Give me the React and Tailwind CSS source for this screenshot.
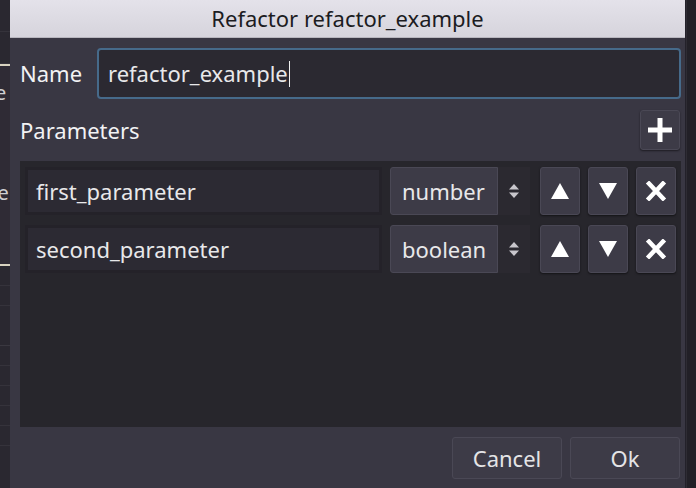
import React from "react";

const font = { fontFamily: '"Noto Sans", "Open Sans", sans-serif' };

function IconBtn({ children }) {
  return (
    <div className="w-[40px] h-[48px] flex items-center justify-center rounded-[3px] bg-[#3d3b47] border border-[#4a4855] shadow-[0_1px_2px_rgba(0,0,0,0.5)]">
      {children}
    </div>
  );
}

function Up() {
  return (
    <svg width="20" height="18" viewBox="0 0 20 18"><polygon points="10,1 19,17 1,17" fill="#fff" /></svg>
  );
}
function Down() {
  return (
    <svg width="20" height="18" viewBox="0 0 20 18"><polygon points="1,1 19,1 10,17" fill="#fff" /></svg>
  );
}
function X() {
  return (
    <svg width="22" height="20" viewBox="0 0 22 20"><path d="M2.5 1 L19.5 19 M19.5 1 L2.5 19" stroke="#fff" strokeWidth="4.5" /></svg>
  );
}

function Row({ name, type }) {
  return (
    <div className="flex items-center h-[48px]">
      <div className="w-[357px] h-[48px] flex items-center pl-[8px] bg-[#2c2a33] border-[3px] border-[#242229] text-[#e8e8ea] text-[22px]">
        {name}
      </div>
      <div className="ml-[8px] flex h-[48px]">
        <div className="w-[108px] h-[48px] flex items-center pl-[11px] bg-[#3d3b47] border border-[#4a4855] rounded-l-[3px] text-[#e8e8ea] text-[22px]">
          {type}
        </div>
        <div className="w-[32px] h-[48px] bg-[#2b2930] flex items-center justify-center">
          <svg width="12" height="20" viewBox="0 0 12 20"><polygon points="6,3 11,8.5 1,8.5" fill="#c8c6cc" /><polygon points="1,11.5 11,11.5 6,17" fill="#c8c6cc" /></svg>
        </div>
      </div>
      <div className="ml-[10px] flex gap-[8px]">
        <IconBtn><Up /></IconBtn>
        <IconBtn><Down /></IconBtn>
        <IconBtn><X /></IconBtn>
      </div>
    </div>
  );
}

export default function App() {
  return (
    <div className="w-[696px] h-[488px] flex bg-[#252329] overflow-hidden" style={font}>
      <div className="w-[10px] h-full flex flex-col bg-[#2a2830] overflow-hidden shrink-0">
        <div className="h-[32px] border-b border-[#35333b]" />
        <div className="h-[32px] border-b border-[#35333b]" />
        <div className="h-[2px] bg-[#d8d2c0]" />
        <div className="h-[198px] bg-[#2f2b35] relative text-[#cfcfd2] text-[20px] overflow-hidden">
          <div className="absolute left-[-5px] top-[12px]">e</div>
          <div className="absolute left-[-12px] top-[112px]">se</div>
        </div>
        <div className="h-[2px] bg-[#d8d2c0]" />
        <div className="h-[20px] border-b border-[#35333b]" />
        <div className="h-[20px] border-b border-[#35333b]" />
        <div className="h-[40px] border-b border-[#3a3840]" />
        <div className="h-[20px] border-b border-[#35333b]" />
        <div className="h-[20px] border-b border-[#35333b]" />
        <div className="h-[20px] border-b border-[#35333b]" />
        <div className="h-[20px] border-b border-[#35333b]" />
        <div className="h-[20px] border-b border-[#35333b]" />
      </div>
      <div className="w-[676px] h-full flex flex-col bg-[#393743] border-r border-[#23212a] shrink-0">
        <div className="h-[38px] bg-gradient-to-b from-[#e4e2ea] to-[#d6d4dc] border-b border-[#b8b6be] flex items-center justify-center text-[#1c1c1f] text-[22px]">
          Refactor refactor_example
        </div>
        <div className="flex-1 flex flex-col pl-[10px] pr-[4px] pt-[10px]">
          <div className="flex items-center h-[51px]">
            <span className="text-[#f2f2f4] text-[22px] w-[77px]">Name</span>
            <div className="flex-1 h-[51px] rounded-[4px] border-2 border-[#466a8a] bg-[#2b2931] flex items-center pl-[9px] text-[#e8e8ea] text-[22px]">
              refactor_example<span className="inline-block w-[1px] h-[26px] bg-[#f0f0f0] ml-[1px]" />
            </div>
          </div>
          <div className="flex items-center justify-between mt-[11px] h-[40px]">
            <span className="text-[#f2f2f4] text-[22px]">Parameters</span>
            <div className="w-[40px] h-[40px] mr-[1px] rounded-[3px] bg-[#3d3b47] border border-[#4a4855] flex items-center justify-center shadow-[0_1px_2px_rgba(0,0,0,0.5)]">
              <svg width="26" height="26" viewBox="0 0 26 26"><path d="M13 1 V25 M1 13 H25" stroke="#fff" strokeWidth="5" /></svg>
            </div>
          </div>
          <div className="mt-[11px] h-[266px] bg-[#27262c] flex flex-col gap-[10px] pt-[6px] pl-[5px]">
            <Row name="first_parameter" type="number" />
            <Row name="second_parameter" type="boolean" />
          </div>
          <div className="flex justify-end gap-[8px] mt-[10px] pr-[1px]">
            <div className="w-[110px] h-[42px] rounded-[3px] bg-[#3d3b47] border border-[#4a4855] flex items-center justify-center text-[#e4e4e6] text-[22px]">Cancel</div>
            <div className="w-[110px] h-[42px] rounded-[3px] bg-[#3d3b47] border border-[#4a4855] flex items-center justify-center text-[#e4e4e6] text-[22px]">Ok</div>
          </div>
        </div>
      </div>
      <div className="w-[10px] h-full bg-[#222027] border-l border-[#2e2c34] shrink-0" />
    </div>
  );
}
